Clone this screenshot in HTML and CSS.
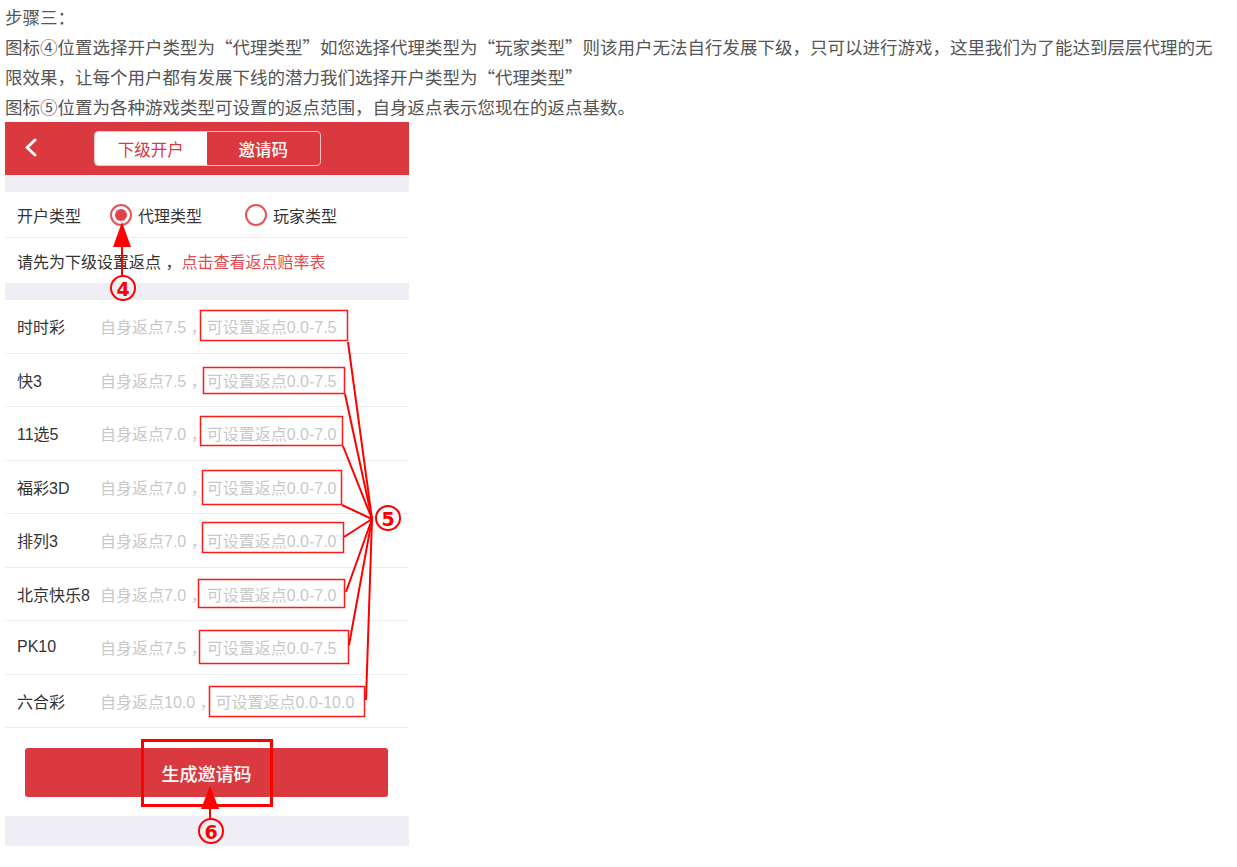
FILE: index.html
```html
<!DOCTYPE html>
<html lang="zh-CN">
<head>
<meta charset="utf-8">
<title>步骤三</title>
<link rel="stylesheet" href="styles.css">
</head>
<body>
<div class="page">
  <div class="article">
    <p>步骤三：</p>
    <p>图标④位置选择开户类型为“代理类型”如您选择代理类型为“玩家类型”则该用户无法自行发展下级，只可以进行游戏，这里我们为了能达到层层代理的无限效果，让每个用户都有发展下线的潜力我们选择开户类型为“代理类型”</p>
    <p>图标⑤位置为各种游戏类型可设置的返点范围，自身返点表示您现在的返点基数。</p>
  </div>

  <div class="phone">
    <div class="header">
      <svg class="back" width="14" height="20" viewBox="0 0 14 20"><polyline points="10,2 2,9.5 10,17" fill="none" stroke="#fff" stroke-width="3" stroke-linecap="round" stroke-linejoin="round"/></svg>
      <div class="tabs">
        <span class="tab active">下级开户</span>
        <span class="tab">邀请码</span>
      </div>
    </div>
    <div class="band"></div>
    <div class="row type-row">
      <span class="label-type">开户类型</span>
      <span class="radio checked"></span><span class="radio-text">代理类型</span>
      <span class="radio second"></span><span class="radio-text">玩家类型</span>
    </div>
    <div class="row tip-row">请先为下级设置返点 ，<span class="link">点击查看返点赔率表</span></div>
    <div class="band"></div>
    <div class="list">
      <div class="item"><span class="name">时时彩</span><span class="ph">自身返点7.5 ，可设置返点0.0-7.5</span></div>
      <div class="item"><span class="name">快3</span><span class="ph">自身返点7.5 ，可设置返点0.0-7.5</span></div>
      <div class="item"><span class="name">11选5</span><span class="ph">自身返点7.0 ，可设置返点0.0-7.0</span></div>
      <div class="item"><span class="name">福彩3D</span><span class="ph">自身返点7.0 ，可设置返点0.0-7.0</span></div>
      <div class="item"><span class="name">排列3</span><span class="ph">自身返点7.0 ，可设置返点0.0-7.0</span></div>
      <div class="item"><span class="name">北京快乐8</span><span class="ph">自身返点7.0 ，可设置返点0.0-7.0</span></div>
      <div class="item"><span class="name">PK10</span><span class="ph">自身返点7.5 ，可设置返点0.0-7.5</span></div>
      <div class="item"><span class="name">六合彩</span><span class="ph">自身返点10.0 ，可设置返点0.0-10.0</span></div>
    </div>
    <div class="btn-area"><div class="btn">生成邀请码</div></div>
    <div class="band bottom"></div>
  </div>

  <svg class="notes" width="1237" height="867" viewBox="0 0 1237 867">
    <g fill="none" stroke="#ff1a1a" stroke-width="1.5">
      <rect x="200.5" y="310.5" width="147" height="30"/>
      <rect x="203.5" y="367.5" width="141" height="26"/>
      <rect x="200.5" y="416.5" width="142" height="29"/>
      <rect x="202.5" y="470.5" width="139" height="34"/>
      <rect x="202.5" y="522.5" width="141" height="30"/>
      <rect x="198.5" y="579.5" width="146" height="28"/>
      <rect x="199.5" y="630.5" width="149" height="33"/>
      <rect x="209.5" y="686.5" width="155" height="30"/>
    </g>
    <g fill="none" stroke="#ff0000" stroke-width="2">
      <line x1="348" y1="342" x2="372" y2="519"/>
      <line x1="345" y1="394" x2="372" y2="519"/>
      <line x1="343" y1="446" x2="372" y2="519"/>
      <line x1="342" y1="505" x2="372" y2="519"/>
      <line x1="344" y1="537" x2="372" y2="519"/>
      <line x1="346" y1="592" x2="372" y2="519"/>
      <line x1="349" y1="645" x2="372" y2="519"/>
      <line x1="366" y1="700" x2="372" y2="519"/>
      <line x1="122" y1="246" x2="122" y2="275"/>
      <line x1="210" y1="808" x2="210" y2="819"/>
      <circle cx="123" cy="288" r="12"/>
      <circle cx="388" cy="518" r="12"/>
      <circle cx="211" cy="831" r="12"/>
    </g>
    <rect x="142.5" y="740.5" width="129" height="65" fill="none" stroke="#ff0000" stroke-width="3"/>
    <polygon points="122,222 113,247 131,247" fill="#ff0000"/>
    <polygon points="210,786 201,809 219,809" fill="#ff0000"/>
    <g class="num" fill="#ff0000">
      <text x="123" y="296" text-anchor="middle">4</text>
      <text x="388" y="526" text-anchor="middle">5</text>
      <text x="211" y="839" text-anchor="middle">6</text>
    </g>
  </svg>
</div>
</body>
</html>
```

FILE: styles.css
```css
* { box-sizing: border-box; }
html, body { margin: 0; padding: 0; background: #fff; }
body {
  font-family: "Noto Sans CJK SC", "Noto Sans", sans-serif;
}
.page {
  position: relative;
  width: 1237px;
  min-height: 867px;
}
.article {
  padding: 2px 0 0 5px;
  width: 1222px;
  color: #555;
  font-size: 17.5px;
  line-height: 30px;
}
.article p { margin: 0; }

.phone {
  width: 404px;
  margin-left: 5px;
  display: flex;
  flex-direction: column;
  background: #fff;
  font-family: "Liberation Sans", "Noto Sans CJK SC", sans-serif;
}
.header {
  height: 53px;
  background: #d9393f;
  display: flex;
  align-items: center;
  justify-content: center;
  position: relative;
}
.back {
  position: absolute;
  left: 20px;
  top: 16px;
}
.tabs {
  display: flex;
  width: 227px;
  height: 35px;
  border: 1.5px solid #f3c3c5;
  border-radius: 4px;
  overflow: hidden;
}
.tab {
  flex: 1;
  display: flex;
  align-items: center;
  justify-content: center;
  color: #fff;
  font-size: 16.5px;
  font-weight: 500;
}
.tab.active {
  background: #fff;
  color: #d9393f;
  font-weight: 400;
}
.band {
  height: 17px;
  background: #eeeef4;
}
.band.bottom { height: 30px; }
.row {
  display: flex;
  align-items: center;
  padding-left: 12px;
  font-size: 16px;
  color: #333;
  border-bottom: 1px solid #ececf0;
}
.type-row { height: 46px; }
.tip-row { height: 45px; border-bottom: none; white-space: pre; }
.label-type { width: 93px; }
.radio {
  width: 22px;
  height: 22px;
  border: 2px solid #e5535a;
  border-radius: 50%;
  display: flex;
  align-items: center;
  justify-content: center;
  margin-right: 6px;
}
.radio.checked::after {
  content: "";
  width: 12px;
  height: 12px;
  border-radius: 50%;
  background: #e0434a;
}
.radio.second { margin-left: 43px; }
.radio-text { color: #333; }
.link { color: #e8474e; }

.list { display: flex; flex-direction: column; }
.item {
  height: 53.5px;
  display: flex;
  align-items: center;
  padding-left: 12px;
  border-bottom: 1px solid #ececf0;
  font-size: 16px;
}
.name { width: 83px; color: #333; white-space: nowrap; }
.ph { color: #c8c8c8; white-space: pre; }

.btn-area {
  padding: 20px 21px 19px 20px;
}
.btn {
  height: 49px;
  background: #d9393f;
  border-radius: 3px;
  color: #fff;
  font-size: 18px;
  font-weight: 500;
  display: flex;
  align-items: center;
  justify-content: center;
}
.notes {
  position: absolute;
  left: 0;
  top: 0;
  pointer-events: none;
}
.num text {
  font-family: "DejaVu Sans", sans-serif;
  font-size: 19px;
  font-weight: bold;
}
```
